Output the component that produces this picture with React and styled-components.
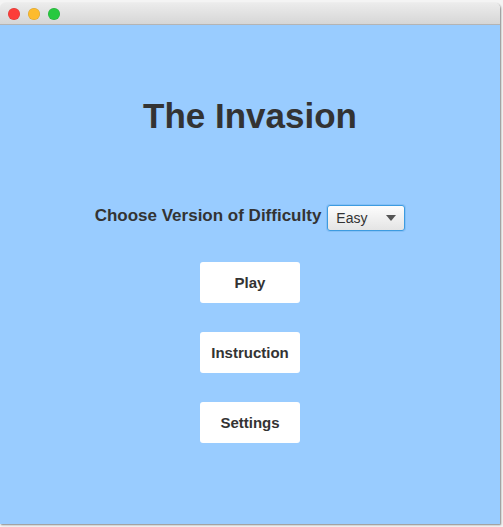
import React from "react";
import styled, { createGlobalStyle } from "styled-components";

const GlobalStyle = createGlobalStyle`
  html, body {
    margin: 0;
    padding: 0;
    background: #f4f4f4;
    font-family: "Liberation Sans", Arial, sans-serif;
  }
`;

const Screen = styled.div`
  width: 503px;
  height: 527px;
  padding-top: 3px;
  box-sizing: border-box;
  overflow: hidden;
`;

const Window = styled.div`
  width: 500px;
  display: flex;
  flex-direction: column;
  border-radius: 5px 5px 0 0;
  box-shadow: 1px 1px 2px rgba(0, 0, 0, 0.45);
`;

const TitleBar = styled.div`
  height: 21px;
  display: flex;
  align-items: center;
  gap: 8px;
  padding-left: 8px;
  background: linear-gradient(#ececec, #d6d6d6);
  border-bottom: 1px solid #b4b4b4;
  border-radius: 5px 5px 0 0;
`;

// traffic lights
const Light = styled.span`
  width: 12px;
  height: 12px;
  border-radius: 50%;
  background: ${(p) => p.color};
  box-shadow: inset 0 0 0 0.5px rgba(0, 0, 0, 0.15);
`;

const Content = styled.div`
  height: 499px;
  background: #99ccff;
  display: flex;
  flex-direction: column;
  align-items: center;
  padding-top: 70px;
  box-sizing: border-box;
  color: #333333;
`;

const Title = styled.h1`
  margin: 0;
  font-size: 35px;
  line-height: 42px;
  font-weight: bold;
`;

const ChooseRow = styled.div`
  margin-top: 68px;
  display: flex;
  align-items: flex-start;
  gap: 6px;
`;

const Label = styled.span`
  margin-top: 2px;
  font-size: 17px;
  font-weight: bold;
  line-height: 18px;
`;

const Select = styled.div`
  width: 78px;
  height: 26px;
  box-sizing: border-box;
  display: flex;
  align-items: center;
  justify-content: space-between;
  padding: 0 8px 0 8px;
  border: 1px solid #3d9be0;
  border-radius: 3px;
  box-shadow: 0 0 0 1px rgba(100, 170, 230, 0.35);
  background: linear-gradient(#fdfdfd, #e4e4e4);
  font-size: 14px;
  color: #333;
`;

const Buttons = styled.div`
  margin-top: 31px;
  display: flex;
  flex-direction: column;
  gap: 29px;
`;

const MenuButton = styled.button`
  width: 100px;
  height: 41px;
  border: none;
  border-radius: 3px;
  background: #ffffff;
  font-family: "Liberation Sans", Arial, sans-serif;
  font-size: 15px;
  font-weight: bold;
  color: #333333;
  padding: 0;
  cursor: pointer;
`;

const App = () => {
  return (
    <>
      <GlobalStyle />
      <Screen>
        <Window>
          <TitleBar>
            <Light color="#fc3d39" />
            <Light color="#fdbb2d" />
            <Light color="#27c93f" />
          </TitleBar>
          <Content>
            <Title>The Invasion</Title>
            <ChooseRow>
              <Label>Choose Version of Difficulty</Label>
              <Select>
                <span>Easy</span>
                <svg width="10" height="6" viewBox="0 0 10 6">
                  <path d="M0 0 L10 0 L5 6 Z" fill="#555" />
                </svg>
              </Select>
            </ChooseRow>
            <Buttons>
              <MenuButton>Play</MenuButton>
              <MenuButton>Instruction</MenuButton>
              <MenuButton>Settings</MenuButton>
            </Buttons>
          </Content>
        </Window>
      </Screen>
    </>
  );
};

export default App;
